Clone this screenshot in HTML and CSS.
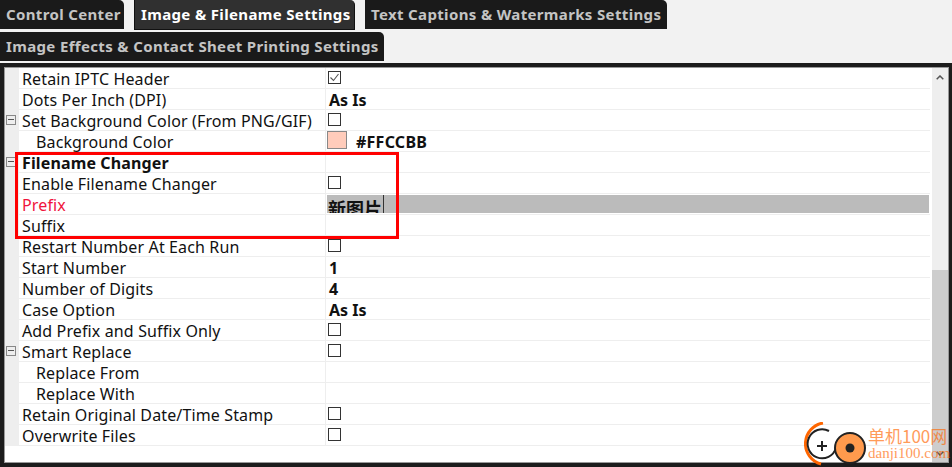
FILE: index.html
```html
<!DOCTYPE html>
<html lang="en">
<head>
<meta charset="utf-8">
<title>Settings</title>
<link rel="stylesheet" href="styles.css">
</head>
<body>
<nav class="tabs">
  <div class="tab tab-a">Control Center</div>
  <div class="tab tab-b active">Image &amp; Filename Settings</div>
  <div class="tab tab-c">Text Captions &amp; Watermarks Settings</div>
  <div class="tab tab-d">Image Effects &amp; Contact Sheet Printing Settings</div>
</nav>
<main class="panel">
  <div class="inner">
    <div class="grid">
      <div class="row"><div class="gutter"></div><div class="name">Retain IPTC Header</div><div class="val"><svg class="chk" viewBox="0 0 13 13"><rect x=".5" y=".5" width="12" height="12" fill="#fff" stroke="#333"/><path d="M2.5 6.500l3 3 5-6.500" fill="none" stroke="#555" stroke-width="1.1"/></svg></div></div>
      <div class="row"><div class="gutter"></div><div class="name">Dots Per Inch (DPI)</div><div class="val bold">As Is</div></div>
      <div class="row"><div class="gutter"><span class="minus"></span></div><div class="name">Set Background Color (From PNG/GIF)</div><div class="val"><span class="box"></span></div></div>
      <div class="row"><div class="gutter"></div><div class="name sub">Background Color</div><div class="val"><span class="swatch"></span><span class="bold hex">#FFCCBB</span></div></div>
      <div class="row"><div class="gutter"><span class="minus"></span></div><div class="name bold">Filename Changer</div><div class="val"></div></div>
      <div class="row"><div class="gutter"></div><div class="name">Enable Filename Changer</div><div class="val"><span class="box"></span></div></div>
      <div class="row"><div class="gutter"></div><div class="name red">Prefix</div><div class="val"><div class="edit"><span class="edit-text">新图片</span></div></div></div>
      <div class="row"><div class="gutter"></div><div class="name">Suffix</div><div class="val"></div></div>
      <div class="row"><div class="gutter"></div><div class="name">Restart Number At Each Run</div><div class="val"><span class="box"></span></div></div>
      <div class="row"><div class="gutter"></div><div class="name">Start Number</div><div class="val bold">1</div></div>
      <div class="row"><div class="gutter"></div><div class="name">Number of Digits</div><div class="val bold">4</div></div>
      <div class="row"><div class="gutter"></div><div class="name">Case Option</div><div class="val bold">As Is</div></div>
      <div class="row"><div class="gutter"></div><div class="name">Add Prefix and Suffix Only</div><div class="val"><span class="box"></span></div></div>
      <div class="row"><div class="gutter"><span class="minus"></span></div><div class="name">Smart Replace</div><div class="val"><span class="box"></span></div></div>
      <div class="row"><div class="gutter"></div><div class="name sub">Replace From</div><div class="val"></div></div>
      <div class="row"><div class="gutter"></div><div class="name sub">Replace With</div><div class="val"></div></div>
      <div class="row"><div class="gutter"></div><div class="name">Retain Original Date/Time Stamp</div><div class="val"><span class="box"></span></div></div>
      <div class="row"><div class="gutter"></div><div class="name">Overwrite Files</div><div class="val"><span class="box"></span></div></div>
    </div>
    <div class="scroll">
      <svg class="arrow" viewBox="0 0 8 5"><path d="M.7 4.300L4 1l3.300 3.300" fill="none" stroke="#555" stroke-width="1.5"/></svg>
      <div class="thumb"><svg class="arrow" viewBox="0 0 8 5"><path d="M.7.7L4 4 7.300.7" fill="none" stroke="#555" stroke-width="1.5"/></svg></div>
    </div>
  </div>
</main>
<div class="redbox"></div>
<div class="mark">
  <svg class="mark-logo" viewBox="0 0 64 44">
    <path d="M19 1a21 21 0 0 0-2 41" fill="none" stroke="#f60" stroke-width="3"/>
    <path d="M25 9a14.500 14.500 0 1 0 7 17" fill="#fff" stroke="#222" stroke-width="2"/>
    <path d="M18 19v10M13 24h10" stroke="#222" stroke-width="2"/>
    <circle cx="46" cy="26" r="15" fill="#ff9a4d" stroke="#222" stroke-width="2"/>
    <circle cx="46" cy="26" r="4.500" fill="#222"/>
  </svg>
  <div class="mark-text"><div class="mark-cn">单机100网</div><div class="mark-en">danji100.com</div></div>
</div>
</body>
</html>
```
FILE: styles.css
```css
* { box-sizing: border-box; }
html, body { margin: 0; height: 467px; overflow: hidden; }
body { width: 952px; background: #f2f2f2; font-family: "Noto Sans", "Noto Sans CJK SC", sans-serif; font-size: 16px; color: #111; position: relative; display: flex; flex-direction: column; }
.tabs { display: flex; flex-wrap: wrap; height: 63px; align-content: flex-start; }
.tab { background: #1a1a1a; color: #c4c4c4; font-weight: 700; font-size: 15px; letter-spacing: .35px; height: 29px; line-height: 29px; border-radius: 0 5px 0 0; padding-left: 6px; white-space: nowrap; }
.tab-a { width: 124px; margin-right: 10px; }
.tab-b { width: 221px; height: 30px; margin-right: 10px; background: #303030; color: #fff; border: 1px solid #111; border-top: 0; line-height: 28px; }
.tab-c { width: 302px; }
.tab-d { width: 384px; margin-top: 2px; }
.panel { flex: 1; background: #1c1c1c; padding: 4px 3px 4px 4px; }
.inner { height: 100%; background: #fff; border: 1px solid #999; display: flex; }
.grid { flex: 1; min-width: 0; border-right: 2px solid #fff; }
.row { display: flex; height: 21px; line-height: 20px; letter-spacing: .13px; }
.gutter { width: 14px; background: #eee; flex: none; display: flex; align-items: center; justify-content: center; padding: 0 3px 2px 1px; }
.name { width: 307px; flex: none; padding: 1px 0 0 3px; border-bottom: 1px solid #eee; border-right: 1px solid #eee; white-space: nowrap; }
.sub { padding-left: 17px; }
.bold { font-weight: 700; }
.red { color: #f0143c; }
.val { flex: 1; min-width: 0; border-bottom: 1px solid #eee; padding: 0 0 0 3px; display: flex; align-items: center; white-space: nowrap; letter-spacing: 0; }
.val.bold { padding-top: 2px; }
.chk, .box { width: 13px; height: 13px; margin: 0 0 2px -1px; flex: none; display: block; }
.box { border: 1px solid #333; background: #fff; }
.minus { width: 10px; height: 10px; border: 1px solid #888; background: linear-gradient(#555, #555) center / 6px 1px no-repeat #eee; }
.swatch { width: 20px; height: 18px; margin: 0 0 2px -2px; background: #fcb; border: 1px solid #888; flex: none; }
.hex { margin-left: 9px; padding-top: 2px; letter-spacing: .25px; }
.edit { flex: 1; height: 18px; margin: 0 1px 0 -2px; background: #bbb; overflow: hidden; font-weight: 700; font-size: 18px; line-height: 28px; padding-left: 1px; }
.edit-text { display: block; width: 56px; height: 18px; border-right: 1px solid #333; letter-spacing: 0; }
.scroll { width: 16px; flex: none; background: #eee; display: flex; flex-direction: column; align-items: center; }
.arrow { width: 8px; height: 5px; margin-top: 7px; flex: none; }
.thumb { width: 16px; margin-top: 190px; flex: 1; background: #cdcdcd; display: flex; flex-direction: column; justify-content: flex-end; align-items: center; padding-bottom: 6px; }
.redbox { position: absolute; left: 15px; top: 152px; width: 384px; height: 87px; border: 3px solid #f00; }
.mark { position: absolute; left: 804px; top: 424px; display: flex; align-items: flex-start; }
.mark-logo { width: 64px; height: 44px; margin-top: -2px; }
.mark-text { margin: 2px 0 0 0; color: #f60; opacity: .65; font-family: "Liberation Serif", "Noto Sans CJK SC", serif; }
.mark-cn { font-size: 17px; line-height: 19px; font-family: "Noto Sans CJK SC", sans-serif; }
.mark-en { font-size: 15px; line-height: 16px; }
```
